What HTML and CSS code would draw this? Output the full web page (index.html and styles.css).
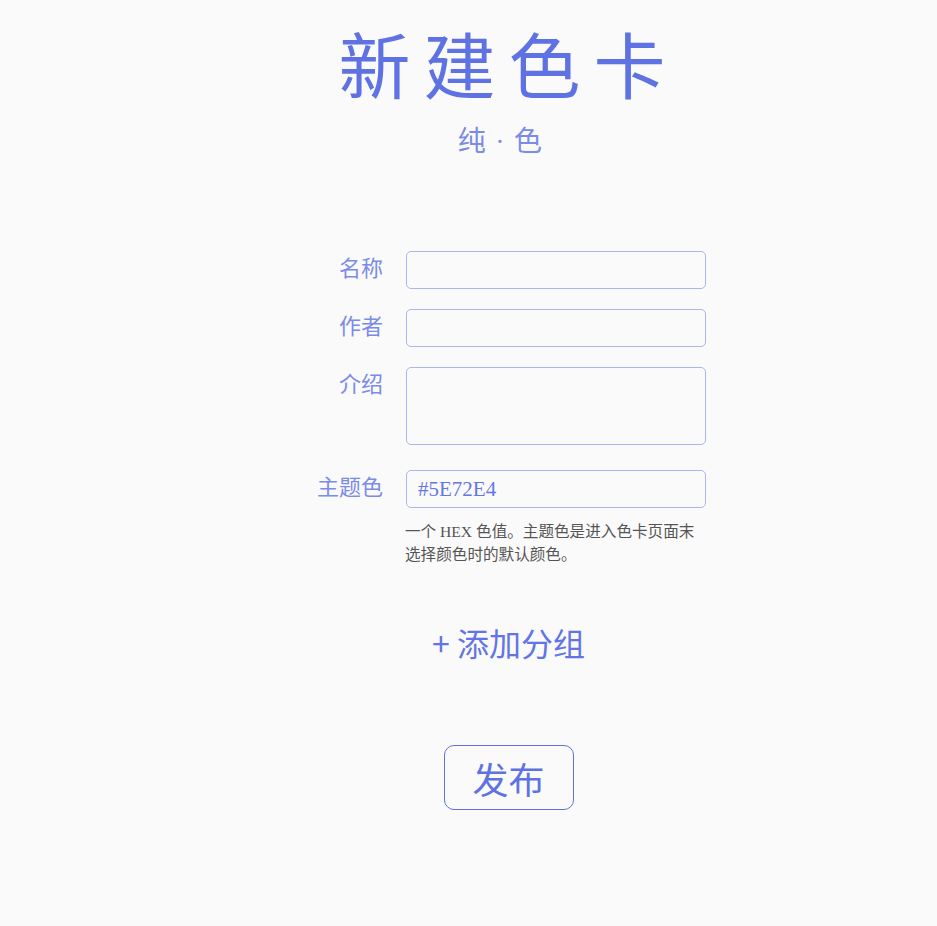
FILE: index.html
```html
<!DOCTYPE html>
<html lang="zh-CN">
<head>
<meta charset="utf-8">
<title>新建色卡</title>
<link rel="stylesheet" href="styles.css">
</head>
<body>
<main class="page">
  <h1 class="title">新建色卡</h1>
  <p class="subtitle">纯<span class="dot"> · </span>色</p>
  <form class="form">
    <label class="label" for="name">名称</label>
    <input class="field" id="name" type="text">
    <label class="label" for="author">作者</label>
    <input class="field" id="author" type="text">
    <label class="label" for="intro">介绍</label>
    <textarea class="field area" id="intro"></textarea>
    <label class="label label-theme" for="theme">主题色</label>
    <div class="theme-cell">
      <input class="field" id="theme" type="text" value="#5E72E4">
      <p class="help">一个 HEX 色值。主题色是进入色卡页面末选择颜色时的默认颜色。</p>
    </div>
  </form>
  <div class="add-group">+ 添加分组</div>
  <button class="publish" type="button">发布</button>
</main>
</body>
</html>
```

FILE: styles.css
```css
html, body {
  margin: 0;
  padding: 0;
  background: #fafafa;
}

body {
  font-family: "Liberation Serif", "Noto Sans CJK SC", serif;
}

.page {
  margin-left: 80px;
  display: flex;
  flex-direction: column;
  align-items: center;
  padding-top: 26px;
  padding-bottom: 60px;
}

.title {
  margin: 0;
  font-family: "Noto Sans CJK SC", sans-serif;
  font-weight: 400;
  font-size: 72px;
  line-height: 72px;
  letter-spacing: 13px;
  color: #5e72e4;
}

.subtitle {
  margin: 27px 16px 0 0;
  font-family: "Noto Sans CJK SC", sans-serif;
  font-size: 28px;
  line-height: 28px;
  letter-spacing: 1.25px;
  color: #7b8be8;
}

.dot {
  font-family: "Liberation Serif", serif;
}

.form {
  margin-top: 95px;
  display: grid;
  grid-template-columns: 72px 300px;
  column-gap: 23px;
  row-gap: 20px;
}

.label {
  text-align: right;
  font-family: "Noto Sans CJK SC", sans-serif;
  font-size: 22px;
  line-height: 30px;
  color: #7b8be8;
  white-space: nowrap;
}

.label-theme,
.theme-cell {
  margin-top: 5px;
}

.field {
  box-sizing: border-box;
  width: 300px;
  height: 38px;
  margin: 0;
  padding: 0 11px;
  border: 1px solid #acb6f1;
  border-radius: 5px;
  background: #fafafa;
  font-family: "Liberation Serif", serif;
  font-size: 21px;
  color: #6677e5;
  outline: none;
}

.area {
  display: block;
  height: 78px;
  resize: none;
}

.theme-cell {
  display: flex;
  flex-direction: column;
}

.help {
  margin: 12px 0 0 -1px;
  width: 304px;
  font-size: 15.6px;
  line-height: 23px;
  color: #555555;
}

.add-group {
  margin-top: 60px;
  font-family: "Noto Sans CJK SC", sans-serif;
  font-size: 32px;
  line-height: 32px;
  color: #6375e5;
}

.publish {
  margin-top: 87px;
  box-sizing: border-box;
  width: 130px;
  height: 65px;
  display: flex;
  align-items: center;
  justify-content: center;
  padding: 0;
  border: 1px solid #5e72e4;
  border-radius: 10px;
  background: #fafafa;
  font-family: "Noto Sans CJK SC", sans-serif;
  font-size: 36px;
  color: #5e72e4;
}
```
